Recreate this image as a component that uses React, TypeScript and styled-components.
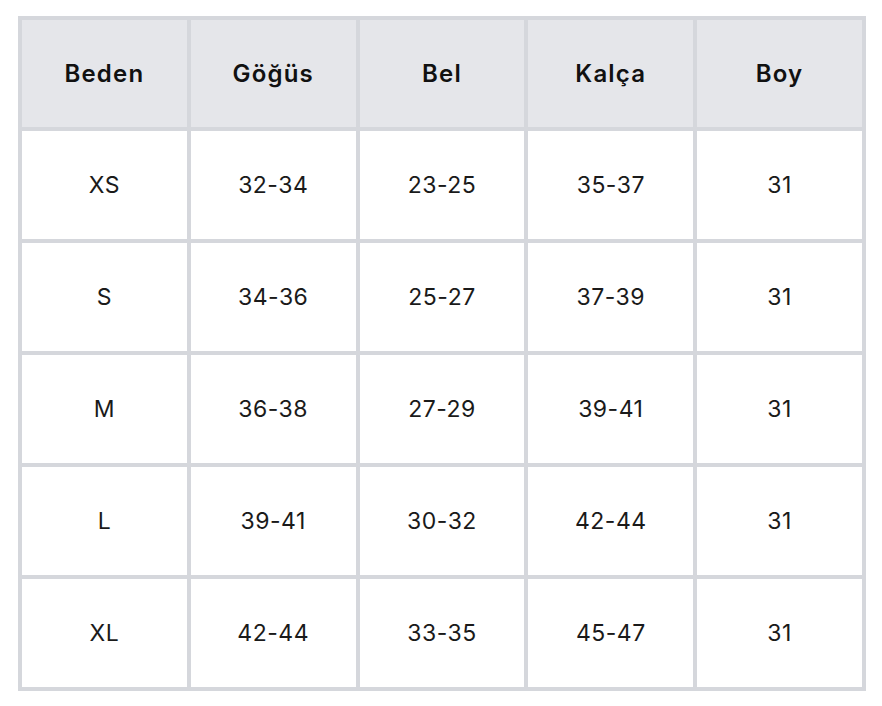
import React from "react";
import styled, { createGlobalStyle } from "styled-components";

const Global = createGlobalStyle`
  html, body { margin: 0; padding: 0; background: #ffffff; }
  body { font-family: "Inter", "Noto Sans", sans-serif; }
`;

const Page = styled.div`
  padding: 16px 16px 0 18px;
`;

const Table = styled.table`
  width: 848px;
  table-layout: fixed;
  border-collapse: separate;
  border-spacing: 0;
  border: 2px solid #d5d7dc;
`;

const HeadCell = styled.th`
  border: 2px solid #d5d7dc;
  background: #e5e6ea;
  height: 107px;
  padding: 0;
  font-size: 24px;
  font-weight: 600;
  letter-spacing: 1.2px;
  color: #111111;
  text-align: center;
  vertical-align: middle;
`;

const Cell = styled.td`
  border: 2px solid #d5d7dc;
  height: 108px;
  padding: 0;
  font-size: 23px;
  font-weight: 400;
  letter-spacing: 0.5px;
  color: #1a1a1a;
  text-align: center;
  vertical-align: middle;
`;

const headers = ["Beden", "Göğüs", "Bel", "Kalça", "Boy"];
const rows = [
  ["XS", "32-34", "23-25", "35-37", "31"],
  ["S", "34-36", "25-27", "37-39", "31"],
  ["M", "36-38", "27-29", "39-41", "31"],
  ["L", "39-41", "30-32", "42-44", "31"],
  ["XL", "42-44", "33-35", "45-47", "31"],
];

export default function App() {
  return (
    <>
      <Global />
      <Page>
        <Table>
          <thead>
            <tr>
              {headers.map((h) => (
                <HeadCell key={h}>{h}</HeadCell>
              ))}
            </tr>
          </thead>
          <tbody>
            {rows.map((r) => (
              <tr key={r[0]}>
                {r.map((c, i) => (
                  <Cell key={i}>{c}</Cell>
                ))}
              </tr>
            ))}
          </tbody>
        </Table>
      </Page>
    </>
  );
}
